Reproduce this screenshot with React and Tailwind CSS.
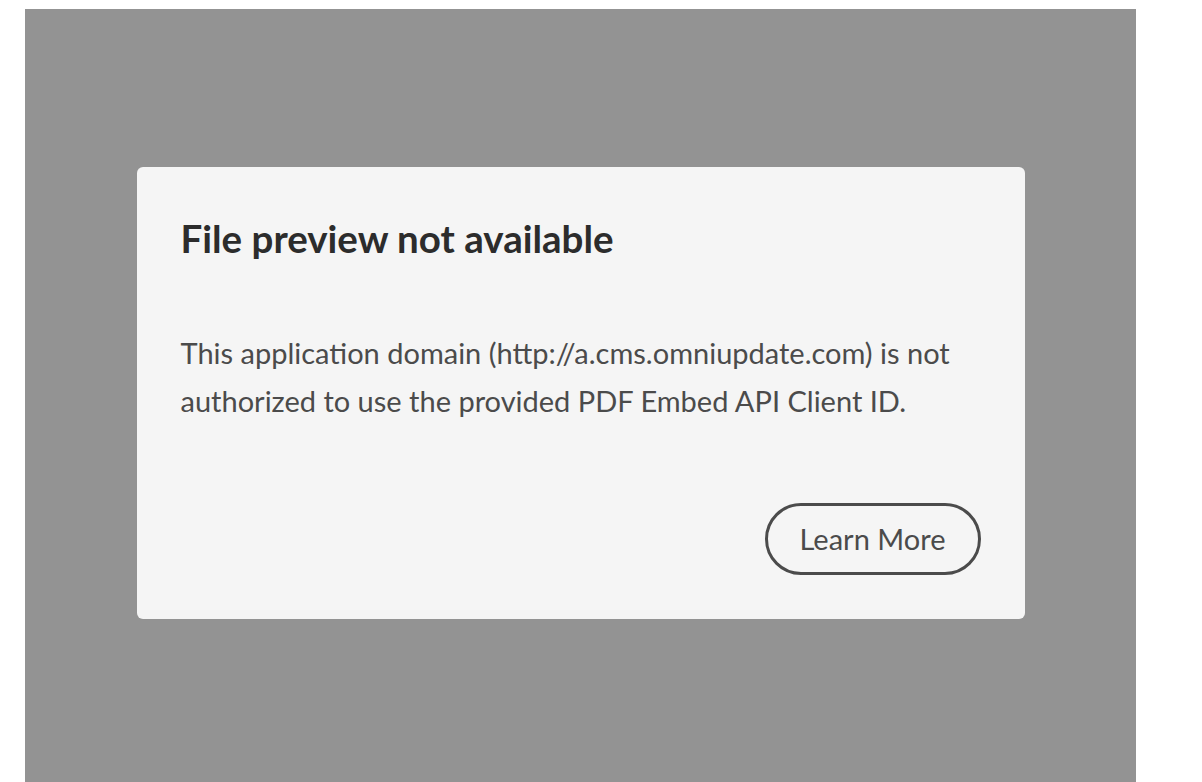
export default function App() {
  return (
    <div className="w-[1202px] h-[782px] bg-white overflow-hidden pt-[9px] pl-[25px]" style={{ fontFamily: "Lato, 'Open Sans', sans-serif" }}>
      <div className="w-[1111px] h-[773px] bg-[#939393] flex justify-center pt-[158px]">
        <div className="w-[888px] h-[452px] bg-[#f5f5f5] rounded-md pt-[47px] px-[44px] pb-[44px] flex flex-col">
          <h1 className="text-[38.5px] leading-[48px] font-bold text-[#2c2c2c]">File preview not available</h1>
          <p className="mt-[67px] text-[29px] leading-[48px] text-[#4b4b4b]">
            This application domain (http://a.cms.omniupdate.com) is not
            <br />
            authorized to use the provided PDF Embed API Client ID.
          </p>
          <div className="mt-auto flex justify-end">
            <button className="w-[216px] h-[72px] rounded-full border-[3px] border-[#4b4b4b] text-[29px] text-[#4b4b4b] flex items-center justify-center">
              Learn More
            </button>
          </div>
        </div>
      </div>
    </div>
  );
}
